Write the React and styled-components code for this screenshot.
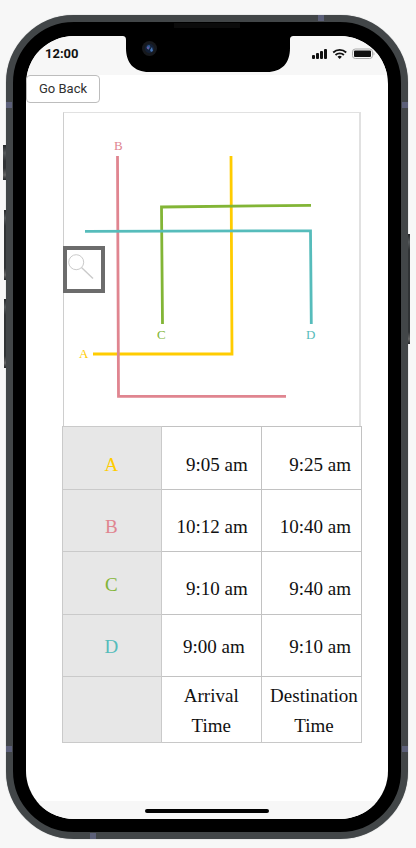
import React from "react";
import styled, { createGlobalStyle } from "styled-components";

const GlobalStyle = createGlobalStyle`
  *, *::before, *::after { box-sizing: border-box; }
  body { margin: 0; background: #f7f7f7; }
`;

const colors = { A: "#ffcc00", B: "#e08590", C: "#82b536", D: "#56bcbb" };

const Page = styled.main`
  padding: 15px 8px 10px 6px;
`;

const Phone = styled.div`
  position: relative;
  border: 7px solid #424648;
  border-radius: 68px;
  background: #000;
  padding: 14px 13px 13px;
  box-shadow: inset 0 0 0 1px #000, 0 0 1px #7d8183;
`;

const SideKey = styled.span`
  position: absolute;
  ${(p) => p.$side}: ${(p) => -7 - p.$depth}px;
  top: ${(p) => p.$top}px;
  width: ${(p) => p.$depth}px;
  height: ${(p) => p.$length}px;
  background: linear-gradient(#242729, #55595b 8px, #303335 16px, #303335 calc(100% - 12px), #666 calc(100% - 5px), #242729);
`;

const SideBand = styled.span`
  position: absolute;
  ${(p) => p.$side}: -7px;
  ${(p) => p.$edge}: 80px;
  width: 6px;
  height: 6px;
  background: #5c6079;
`;

const EndBand = styled.span`
  position: absolute;
  ${(p) => p.$end}: -7px;
  ${(p) => p.$edge}: 77px;
  width: 6px;
  height: 6px;
  background: #5c6079;
`;

const Speaker = styled.span`
  position: absolute;
  top: 1px;
  left: 50%;
  width: 66px;
  height: 5px;
  margin-left: -33px;
  background: #0b0b0b;
`;

const Screen = styled.div`
  position: relative;
  overflow: hidden;
  border-radius: 48px;
  background: #fff;
`;

const StatusBar = styled.header`
  display: flex;
  justify-content: space-between;
  align-items: center;
  height: 39px;
  padding: 0 12px 4px 19px;
  background: #f7f7f7;
`;

const Clock = styled.time`
  font: 700 13px/16px Roboto, sans-serif;
  color: #111;
`;

const StatusIcons = styled.svg`
  display: block;
  width: 64px;
  height: 12px;
`;

const Notch = styled.svg`
  position: absolute;
  top: 0;
  left: 50%;
  width: 172px;
  height: 36px;
  margin-left: -85px;
`;

const BackButton = styled.button`
  display: block;
  height: 28px;
  padding: 0 12px;
  border: 1px solid #bdbdbd;
  border-radius: 4px;
  background: #fff;
  color: #303030;
  font: 400 13px/18px Roboto, sans-serif;
`;

const Content = styled.section`
  padding: 9px 26px 58px 36px;
`;

const MapPanel = styled.div`
  position: relative;
  margin: 0 1px;
  border: solid #e1e1e1;
  border-width: 1px 2px 0 1px;
  border-left-color: #cecece;
`;

const RouteMap = styled.svg`
  display: block;
  width: 100%;
  height: auto;
  font: 13px "Liberation Serif", serif;
`;

const SearchButton = styled.button`
  position: absolute;
  top: 133px;
  left: -1px;
  width: 42px;
  height: 47px;
  padding: 0;
  border: 4px solid #6c6c6c;
  background: #fff;

  svg { display: block; }
`;

const Timetable = styled.table`
  width: 100%;
  table-layout: fixed;
  border-collapse: collapse;
  font: 19px/30px "Liberation Serif", serif;
  color: #111;
`;

const RouteColumn = styled.col`
  width: 33%;
`;

const Row = styled.tr`
  height: ${(p) => p.$height}px;
`;

const RouteCell = styled.th`
  padding: ${(p) => p.$top}px 1px 0 0;
  border: 1px solid #cacaca;
  background: #e7e7e7;
  color: ${(p) => p.$color};
  font-weight: 400;
  text-align: center;
  vertical-align: top;
`;

const TimeCell = styled.td`
  padding: ${(p) => p.$top}px ${(p) => p.$right}px 0 0;
  border: 1px solid #c2c2c2;
  text-align: right;
  vertical-align: top;
  white-space: nowrap;
`;

const CaptionCell = styled.td`
  padding: 4px ${(p) => p.$right}px 0 5px;
  border: 1px solid #c8c8c8;
  text-align: center;
  vertical-align: top;
`;

const HomeArea = styled.footer`
  display: flex;
  justify-content: center;
  height: 18px;
  padding-top: 8px;
  background: #f7f7f7;
`;

const HomeBar = styled.span`
  width: 124px;
  height: 4px;
  border-radius: 2px;
  background: #000;
`;

const rows = [
  { route: "A", arrive: "9:05 am", reach: "9:25 am", height: 63, top: 23, timeTop: 23, right: 13 },
  { route: "B", arrive: "10:12 am", reach: "10:40 am", height: 62, top: 22, timeTop: 22, right: 13 },
  { route: "C", arrive: "9:10 am", reach: "9:40 am", height: 63, top: 18, timeTop: 22, right: 13 },
  { route: "D", arrive: "9:00 am", reach: "9:10 am", height: 62, top: 17, timeTop: 17, right: 16 },
];

function StatusGlyphs() {
  return (
    <StatusIcons viewBox="0 0 64 12" aria-hidden="true">
      <g fill="#111">
        <rect x="0" y="7" width="3" height="4" rx="1" />
        <rect x="4" y="5" width="3" height="6" rx="1" />
        <rect x="8" y="3" width="3" height="8" rx="1" />
        <rect x="12" y="1" width="3" height="10" rx="1" />
        <path d="M25.5 8.7a3.2 3.2 0 0 1 4.4 0L27.7 11Z" />
      </g>
      <g fill="none" stroke="#111" strokeWidth="1.8">
        <path d="M21.2 4.5a9.3 9.3 0 0 1 13 0" />
        <path d="M23.5 7a6 6 0 0 1 8.4 0" />
      </g>
      <rect x="40.5" y="1" width="20" height="9.5" rx="2.8" fill="none" stroke="#aaa" />
      <rect x="42" y="2.5" width="17" height="6.5" rx="1" fill="#111" />
      <path d="M61.5 4c1.3.3 1.3 3.3 0 3.6Z" fill="#aaa" />
    </StatusIcons>
  );
}

function CameraNotch() {
  return (
    <Notch viewBox="0 0 172 36" aria-hidden="true">
      <path d="M0 0C3 0 4 1 4 4V12C4 27 12 36 27 36H145C160 36 168 27 168 12V4C168 1 169 0 172 0Z" />
      <circle cx="27.5" cy="12.5" r="7.5" fill="#17191d" />
      <circle cx="27.5" cy="12.5" r="4.7" fill="#142036" />
      <path d="M24.5 12a3 3 0 0 1 3-3l1 2-2 3Z" fill="#315a93" />
      <path d="M28 14l2-3 1 4-2 1Z" fill="#4474b5" />
      <circle cx="26" cy="12" r="1" fill="#765a9e" />
    </Notch>
  );
}

function Routes() {
  return (
    <RouteMap viewBox="0 0 295 313" role="img" aria-label="Map of routes A, B, C and D">
      <g fill="none" strokeWidth="2.8">
        <path d="M29 241H168L167 43" stroke={colors.A} />
        <path d="M53.5 43L54.5 283.4H222" stroke={colors.B} />
        <path d="M98.5 211L97.5 94L247 92.3" stroke={colors.C} />
        <path d="M21 118.4L246.5 117.8L247.3 211" stroke={colors.D} />
      </g>
      <text x="15" y="245" fill={colors.A}>A</text>
      <text x="50" y="37" fill={colors.B}>B</text>
      <text x="93" y="226" fill={colors.C}>C</text>
      <text x="242" y="226" fill={colors.D}>D</text>
    </RouteMap>
  );
}

export default function App() {
  return (
    <Page>
      <GlobalStyle />
      <Phone>
        <SideKey $side="left" $depth={3} $top={123} $length={35} />
        <SideKey $side="left" $depth={2} $top={188} $length={70} />
        <SideKey $side="left" $depth={2} $top={277} $length={69} />
        <SideKey $side="right" $depth={2} $top={212} $length={110} />
        <SideBand $side="left" $edge="top" />
        <SideBand $side="right" $edge="top" />
        <SideBand $side="left" $edge="bottom" />
        <SideBand $side="right" $edge="bottom" />
        <EndBand $end="top" $edge="right" />
        <EndBand $end="bottom" $edge="left" />
        <Speaker />
        <Screen>
          <StatusBar>
            <Clock>12:00</Clock>
            <StatusGlyphs />
          </StatusBar>
          <CameraNotch />
          <BackButton type="button">Go Back</BackButton>
          <Content>
            <MapPanel>
              <Routes />
              <SearchButton type="button" aria-label="Search">
                <svg width="34" height="39" viewBox="0 0 34 39" fill="none" stroke="#cacaca">
                  <circle cx="9.2" cy="12.2" r="7.5" />
                  <path d="M14.5 17.5L26 28.5" strokeWidth="1.4" />
                </svg>
              </SearchButton>
            </MapPanel>
            <Timetable>
              <colgroup>
                <RouteColumn />
                <col />
                <col />
              </colgroup>
              <tbody>
                {rows.map((r) => (
                  <Row key={r.route} $height={r.height}>
                    <RouteCell scope="row" $top={r.top} $color={colors[r.route]}>{r.route}</RouteCell>
                    <TimeCell $top={r.timeTop} $right={r.right}>{r.arrive}</TimeCell>
                    <TimeCell $top={r.timeTop} $right={10}>{r.reach}</TimeCell>
                  </Row>
                ))}
                <Row $height={66}>
                  <RouteCell as="td" $top={0} />
                  <CaptionCell $right={5}>Arrival Time</CaptionCell>
                  <CaptionCell $right={0}>Destination Time</CaptionCell>
                </Row>
              </tbody>
            </Timetable>
          </Content>
          <HomeArea><HomeBar /></HomeArea>
        </Screen>
      </Phone>
    </Page>
  );
}
